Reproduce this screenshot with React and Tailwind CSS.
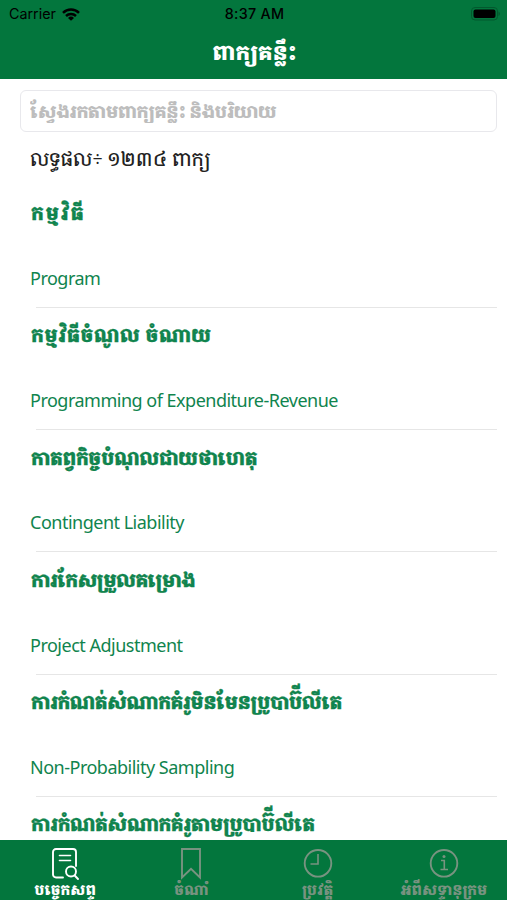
import React, { useState } from "react";

const words = [
    { km: "កម្មវិធី", en: "Program", spacing: "tracking-[1.500px]" },
    { km: "កម្មវិធីចំណូល ចំណាយ", en: "Programming of Expenditure-Revenue", spacing: "tracking-[0.300px]" },
    { km: "កាតព្វកិច្ចបំណុលជាយថាហេតុ", en: "Contingent Liability", spacing: "tracking-[-0.450px]" },
    { km: "ការកែសម្រួលគម្រោង", en: "Project Adjustment", spacing: "tracking-[-0.800px]" },
    { km: "ការកំណត់សំណាកគំរូមិនមែនប្រូបាប៊ីលីតេ", en: "Non-Probability Sampling", spacing: "tracking-[-0.600px]" },
    { km: "ការកំណត់សំណាកគំរូតាមប្រូបាប៊ីលីតេ", spacing: "tracking-[-0.550px]" },
];

function SearchDocIcon() {
    return (
        <svg width="28" height="34" viewBox="0 0 28 34" fill="none" stroke="currentColor" strokeWidth="1.900" strokeLinecap="round" strokeLinejoin="round">
            <path d="M12 30.500H5a3 3 0 0 1-3-3V5a3 3 0 0 1 3-3h17a3 3 0 0 1 3 3v14" />
            <path d="M8.500 8.500h11M8.500 13.500h11" strokeWidth="1.600" />
            <circle cx="20" cy="24.500" r="5" />
            <path d="M23.700 28.500l3.300 3.500" />
        </svg>
    );
}

function BookmarkIcon() {
    return (
        <svg width="28" height="34" viewBox="0 0 28 34" fill="none" stroke="currentColor" strokeWidth="1.900">
            <path d="M5 2h18v28.500l-9-8.700-9 8.700z" />
        </svg>
    );
}

function ClockIcon() {
    return (
        <svg width="30" height="34" viewBox="0 0 30 34" fill="none" stroke="currentColor" strokeWidth="1.900">
            <circle cx="15" cy="16.300" r="13.300" />
            <path d="M15 7v10H7.500" strokeWidth="1.600" />
        </svg>
    );
}

function InfoIcon() {
    return (
        <svg width="30" height="34" viewBox="0 0 30 34" fill="none" stroke="currentColor" strokeWidth="1.900">
            <circle cx="15" cy="16.300" r="13.300" />
            <path d="M12 13.500h3.300v9M11.500 22.500h7.500" strokeWidth="1.600" />
            <circle cx="15" cy="9.500" r="1.500" fill="currentColor" stroke="none" />
        </svg>
    );
}

const tabs = [
    { label: "បច្ចេកសព្ទ", icon: SearchDocIcon },
    { label: "ចំណាំ", icon: BookmarkIcon },
    { label: "ប្រវត្តិ", icon: ClockIcon },
    { label: "អំពីសទ្ទានុក្រម", icon: InfoIcon },
];

function StatusBar() {
    return (
        <div className="grid h-7 grid-cols-3 items-center pl-[9px] pr-[7px] text-[14.300px] text-black font-['Inter',sans-serif]">
            <div className="flex items-center gap-1.5">
                <span>Carrier</span>
                <svg width="18" height="13" viewBox="0 0 18 13" fill="none" stroke="currentColor" strokeWidth="2.500">
                    <path d="M1 4.800a11.500 11.500 0 0 1 16 0M4 8a7.300 7.300 0 0 1 10 0" />
                    <path d="M9 12.800L6 9.900a4.300 4.300 0 0 1 6 0z" fill="currentColor" stroke="none" />
                </svg>
            </div>
            <span className="text-center font-medium tracking-[0.300px]">8:37 AM</span>
            <svg className="justify-self-end" width="30" height="14" viewBox="0 0 30 14">
                <rect x="1.500" y="0.500" width="26" height="12.500" rx="3.500" fill="none" stroke="#02592e" />
                <rect x="3.500" y="2.500" width="22" height="8.500" rx="2" />
                <path d="M28.500 4.500v4.500c1.800-.8 1.800-3.700 0-4.500z" fill="#02592e" />
            </svg>
        </div>
    );
}

function App() {
    const [active, setActive] = useState(0);
    const [search, setSearch] = useState("");

    return (
        <div className="flex h-[900px] w-[507px] flex-col overflow-hidden bg-white font-['Noto_Serif_Khmer','Noto_Sans_Khmer','Noto_Sans',sans-serif]">
            <header className="h-[79px] shrink-0 bg-[#03763d]">
                <StatusBar />
                <h1 className="flex h-12 items-center justify-center whitespace-nowrap pt-0.5 pl-0.5 text-[21px] font-black text-white">ពាក្យគន្លឹះ</h1>
            </header>

            <main className="min-h-0 flex-1 overflow-hidden pt-[11px] pr-[10px] pl-5">
                <input
                    value={search}
                    onChange={(e) => setSearch(e.target.value)}
                    placeholder="ស្វែងរកតាមពាក្យគន្លឹះ និងបរិយាយ"
                    className="block h-[42px] w-full rounded-md border border-[#e8e8ec] px-[9px] text-[17.500px] font-black tracking-[-0.700px] outline-none placeholder:text-[#bdbdbd]"
                />
                <p className="flex h-[54px] items-center pl-2.5 text-[19px] font-medium tracking-[-0.150px] text-[#222]">លទ្ធផល÷ ១២៣៤ ពាក្យ</p>
                <ul>
                    {words.map((w) => (
                        <li key={w.km} className="h-[122.200px] text-[#10844e]">
                            <div className={`flex h-[54px] items-center whitespace-nowrap pl-[11px] text-[18.500px] font-black [-webkit-text-stroke:0.300px_currentColor] ${w.spacing}`}>{w.km}</div>
                            <div className="flex h-[67px] items-center whitespace-nowrap pt-2.5 pl-2.5 text-[18px] tracking-[-0.500px] font-['Noto_Sans',sans-serif]">{w.en}</div>
                            <div className="ml-4 h-px bg-[#e6e6e6]" />
                        </li>
                    ))}
                </ul>
            </main>

            <nav className="grid h-[60px] shrink-0 grid-cols-4 bg-[#03763d] pl-[2px]">
                {tabs.map(({ label, icon: Icon }, i) => (
                    <button
                        key={label}
                        onClick={() => setActive(i)}
                        className={`flex flex-col items-center pt-[7px] ${i === active ? "text-white" : "text-[#789380]"}`}
                    >
                        <Icon />
                        <span className="whitespace-nowrap text-[14px] leading-[17px] font-black">{label}</span>
                    </button>
                ))}
            </nav>
        </div>
    );
}

export default App;
